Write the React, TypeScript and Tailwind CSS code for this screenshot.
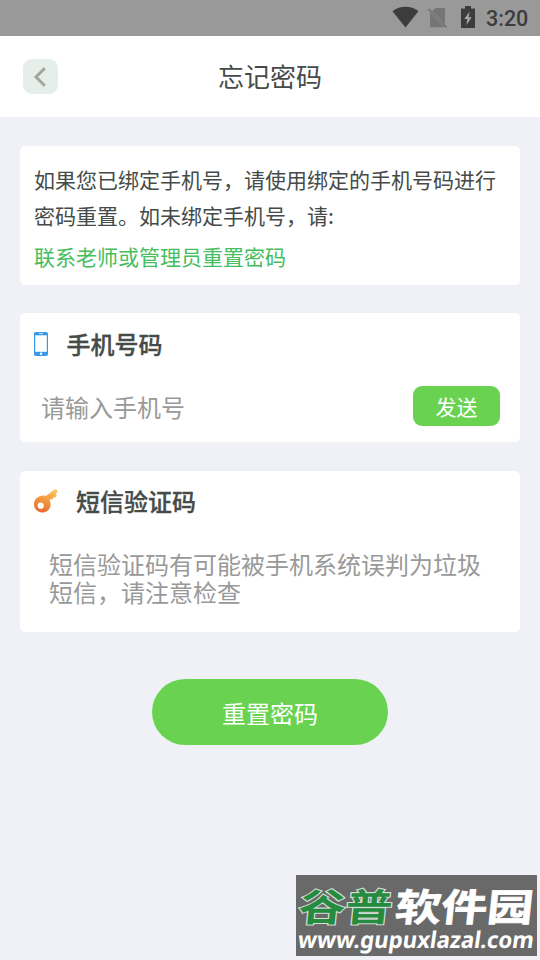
import React from "react";

function StatusBar() {
  return (
    <div className="flex h-9 shrink-0 items-center bg-[#999999] text-[#3c3c3c]">
      <svg className="ml-[392px] h-9 w-[92px] shrink-0" viewBox="392 0 92 36">
        <path d="M392.5 11.2C400 5.4 411 5.4 418.4 11.2L405.5 27.5Z" fill="#3c3c3c" />
        <path d="M435.5 8H445V24L432.5 11ZM430 12.5L444.3 27.2H430Z" fill="#757575" />
        <path d="M428.5 9L446.5 27.5" stroke="#757575" strokeWidth="1.8" />
        <path d="M461 8.5H465V6H471V8.5H475V28H461Z" fill="#3c3c3c" />
        <path d="M469.7 11.5L464.3 19H467.4L466.3 25.3L471.7 17.3H468.6Z" fill="#a6a6a6" />
      </svg>
      <span className="ml-[2px] mt-[2px] font-[Roboto,sans-serif] text-[21.5px] leading-none font-medium">3:20</span>
    </div>
  );
}

function PhoneIcon() {
  return (
    <svg className="h-6 w-[14px]" viewBox="0 0 14 24">
      <rect width="14" height="24" rx="2" fill="#3598e8" />
      <rect x="1.2" y="3.3" width="11.6" height="16.5" fill="#fff" />
      <path d="M5 1.6H9" stroke="#d7ecff" strokeWidth="0.9" />
      <circle cx="7" cy="21.8" r="1.2" fill="#fff" />
    </svg>
  );
}

function KeyIcon() {
  return (
    <svg className="relative -top-px h-6 w-6" viewBox="0 0 24 24">
      <defs>
        <linearGradient id="key" x1="0.7" y1="0" x2="0.35" y2="1">
          <stop offset="0" stopColor="#f9c55a" />
          <stop offset="0.5" stopColor="#f3963d" />
          <stop offset="1" stopColor="#e9692b" />
        </linearGradient>
      </defs>
      <path
        fill="url(#key)"
        fillRule="evenodd"
        d="M11.8 6.9L20.6.5L23.2.7L23.2 3.6L21.6 4.8L22.8 6.6L20.9 8.8L19.2 8L18.6 10.6L16.4 10L15.7 11.6C18.6 17.4 14.4 23.6 8.6 23.6C3.9 23.6 0 20 0 15.3C0 9.2 5.9 5.3 11.8 6.9ZM6.7 13.6A3.1 3.1 0 1 0 6.7 19.8A3.1 3.1 0 1 0 6.7 13.6Z"
      />
    </svg>
  );
}

function Watermark() {
  return (
    <svg className="absolute top-[875px] left-[296px] h-[81px] w-[241px]" viewBox="0 0 241 81">
      <rect width="241" height="81" fill="#69696a" />
      <g fontFamily="'Noto Sans CJK SC', sans-serif" fontWeight="700" fontSize="43">
        <text
          transform="translate(1.5 45.5) skewX(-6) scale(1.09 0.88)"
          fill="#258b3e"
          stroke="#d5ddd5"
          strokeWidth="2.4"
          paintOrder="stroke"
        >
          谷普
        </text>
        <text
          transform="translate(98 45.5) skewX(-6) scale(1.07 0.88)"
          fill="#ffffff"
          stroke="#ffffff"
          strokeWidth="0.8"
        >
          软件园
        </text>
      </g>
      <text
        transform="translate(1 73) skewX(-8)"
        textLength="236"
        lengthAdjust="spacingAndGlyphs"
        fontFamily="'Noto Sans', sans-serif"
        fontWeight="700"
        fontSize="23"
        fill="#ffffff"
      >
        www.gupuxlazal.com
      </text>
    </svg>
  );
}

export default function App() {
  return (
    <div className="relative flex h-[960px] w-[540px] flex-col overflow-hidden bg-[#eff1f7] font-['Noto_Sans_CJK_SC',sans-serif] text-[#454b48]">
      <StatusBar />
      <header className="grid h-[81px] shrink-0 grid-cols-[1fr_auto_1fr] items-center bg-white">
        <button className="ml-[23px] flex h-[35px] w-[35px] items-center justify-center rounded-[9px] bg-[#e6eeea]">
          <svg className="h-5 w-5" viewBox="0 0 20 20" fill="none" stroke="#a0a7a3" strokeWidth="3">
            <path d="M13.8 1.2L5 10L13.8 18.8" />
          </svg>
        </button>
        <h1 className="-mt-[2px] text-[26px] leading-9">忘记密码</h1>
      </header>
      <main className="flex flex-col px-5 pt-[29px]">
        <section className="h-[139px] rounded-[5px] bg-white px-[14px] pt-[15px] text-[21px] leading-9">
          <p>如果您已绑定手机号，请使用绑定的手机号码进行</p>
          <p>密码重置。如未绑定手机号，请:</p>
          <p className="mt-[5px] text-[#46bd5e]">联系老师或管理员重置密码</p>
        </section>
        <section className="mt-7 h-[129px] rounded-[5px] bg-white px-[14px] pt-[13px]">
          <div className="flex h-9 items-center gap-[18.5px]">
            <PhoneIcon />
            <h2 className="-mt-px text-2xl leading-9 font-medium [-webkit-text-stroke:0.3px_#454b48]">手机号码</h2>
          </div>
          <div className="mt-6 flex h-10 items-center justify-between pr-[6px] pl-[7px]">
            <span className="pt-px text-2xl text-[#999999]">请输入手机号</span>
            <button className="h-10 w-[87px] rounded-[9px] bg-[#69d351] pt-[2px] text-[21px] text-white">发送</button>
          </div>
        </section>
        <section className="mt-[29px] h-[161px] rounded-[5px] bg-white px-[14px] pt-[13px]">
          <div className="flex h-9 items-center gap-[18px]">
            <KeyIcon />
            <h2 className="-mt-[2px] text-2xl leading-9 font-medium [-webkit-text-stroke:0.3px_#454b48]">短信验证码</h2>
          </div>
          <p className="mt-[30px] pl-[15px] text-2xl leading-7 whitespace-nowrap text-[#999999]">
            短信验证码有可能被手机系统误判为垃圾
            <br />
            短信，请注意检查
          </p>
        </section>
        <button className="mt-[47px] h-[66px] w-[236px] self-center rounded-full bg-[#69d351] pt-px text-2xl text-white">
          重置密码
        </button>
      </main>
      <Watermark />
    </div>
  );
}
